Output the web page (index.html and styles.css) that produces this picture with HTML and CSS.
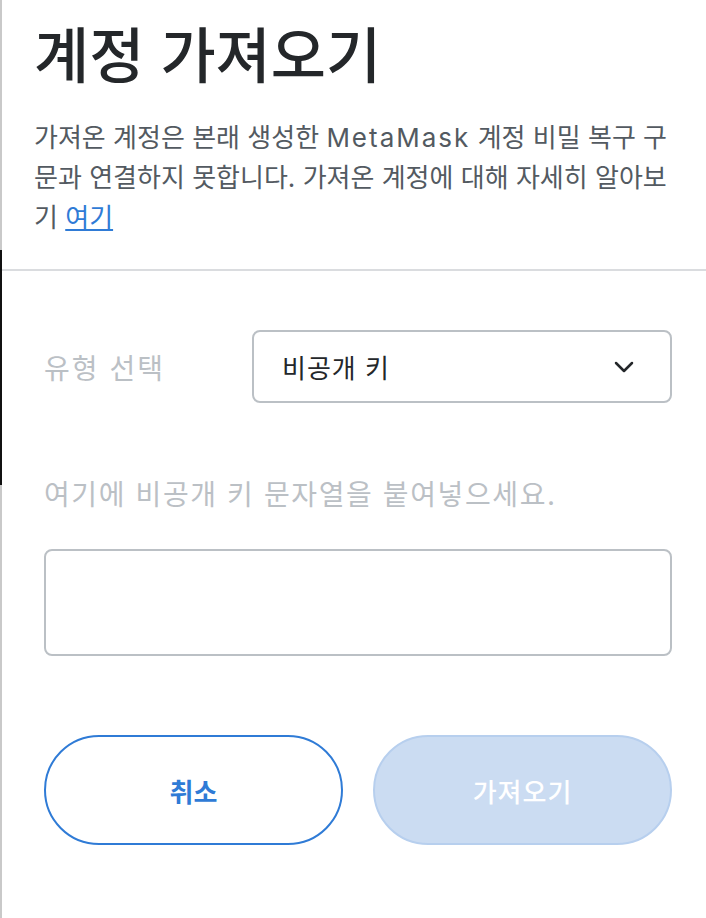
FILE: index.html
```html
<!DOCTYPE html>
<html lang="ko">
  <head>
    <meta charset="UTF-8" />
    <meta name="viewport" content="width=device-width, initial-scale=1.0" />
    <title>계정 가져오기</title>
    <link rel="stylesheet" href="styles.css">
  </head>
  <body>
    <div class="page">
      <div class="edge">
        <span class="edge-top"></span>
        <span class="edge-dark"></span>
        <span class="edge-bottom"></span>
      </div>

      <main class="modal">
        <header class="modal-header">
          <h1>계정 가져오기</h1>
          <p class="intro">
            가져온 계정은 본래 생성한 <span class="brand">MetaMask</span> 계정 비밀 복구 구문과 연결하지 못합니다. 가져온 계정에 대해 자세히 알아보기 <a href="#">여기</a>
          </p>
        </header>

        <section class="modal-body">
          <div class="type-row">
            <span class="type-label">유형 선택</span>
            <div class="select">
              <span>비공개 키</span>
              <svg width="20" height="12" viewBox="0 0 20 12">
                <path d="M2 2 L10 10 L18 2" fill="none" stroke="#24272a" stroke-width="2.5" stroke-linecap="round" stroke-linejoin="round" />
              </svg>
            </div>
          </div>

          <label class="paste-label" for="keyInput">여기에 비공개 키 문자열을 붙여넣으세요.</label>
          <textarea class="key-input" id="keyInput"></textarea>

          <div class="actions">
            <button class="btn btn-cancel">취소</button>
            <button class="btn btn-import" disabled>가져오기</button>
          </div>
        </section>
      </main>
    </div>
  </body>
</html>
```

FILE: styles.css
```css
body {
  margin: 0;
  font-family: Inter, "Noto Sans CJK KR", sans-serif;
  background: #fff;
  color: #24272a;
}
.page {
  display: flex;
  min-height: 918px;
}
.edge {
  width: 2px;
  display: flex;
  flex-direction: column;
}
.edge-top {
  height: 250px;
  background: #c9c9c9;
}
.edge-dark {
  height: 235px;
  background: #111;
}
.edge-bottom {
  flex: 1;
  background: #c9c9c9;
}
.modal {
  flex: 1;
}
.modal-header {
  padding: 20px 31px 31px 32px;
  border-bottom: 2px solid #dadcdf;
}
h1 {
  margin: 0;
  font-size: 60px;
  font-weight: 500;
  line-height: 72px;
}
.intro {
  margin: 26px 0 0;
  font-size: 26px;
  line-height: 40px;
  color: #535a61;
}
.intro .brand {
  letter-spacing: 2px;
}
.intro a {
  color: #2f7bd6;
}
.modal-body {
  padding: 59px 34px 40px 42px;
}
.type-row {
  display: grid;
  grid-template-columns: 208px 1fr;
  align-items: center;
}
.type-label {
  font-size: 28px;
  letter-spacing: 2px;
  color: #bbc0c5;
}
.select {
  height: 73px;
  box-sizing: border-box;
  border: 2px solid #bbc0c5;
  border-radius: 8px;
  padding: 0 36px 0 28px;
  display: flex;
  align-items: center;
  justify-content: space-between;
  font-size: 26px;
  letter-spacing: 1px;
}
.paste-label {
  display: block;
  margin-top: 72px;
  font-size: 28px;
  letter-spacing: 1.6px;
  line-height: 40px;
  color: #bbc0c5;
}
.key-input {
  display: block;
  width: 100%;
  height: 107px;
  box-sizing: border-box;
  margin-top: 34px;
  border: 2px solid #bbc0c5;
  border-radius: 8px;
  resize: none;
}
.actions {
  display: grid;
  grid-template-columns: 1fr 1fr;
  gap: 30px;
  margin-top: 79px;
}
.btn {
  height: 110px;
  border-radius: 55px;
  font-family: inherit;
  font-size: 26px;
}
.btn-cancel {
  background: #fff;
  border: 2px solid #2f7bd6;
  color: #2f7bd6;
  font-weight: 700;
}
.btn-import {
  background: #cbdcf2;
  border: 2px solid #b7cfee;
  color: #fff;
  font-weight: 500;
  letter-spacing: 1px;
}
```
